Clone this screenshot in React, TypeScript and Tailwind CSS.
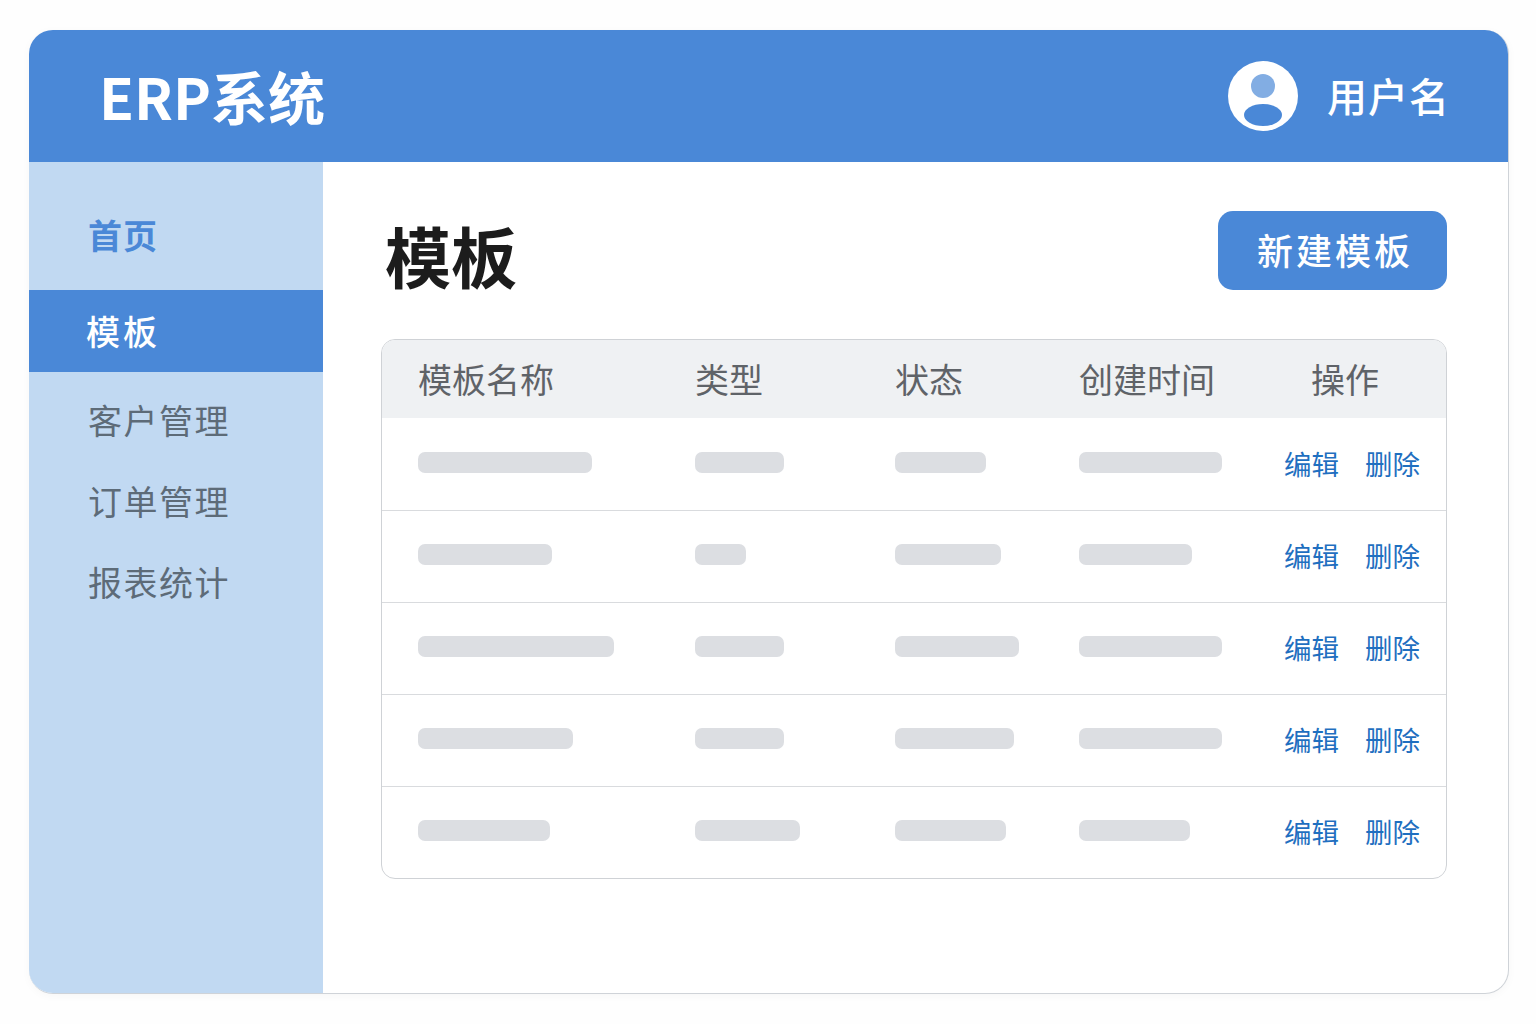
import React from "react";

const columns = "grid grid-cols-[277px_200px_184px_206px_1fr] items-center pl-[36px]";

// skeleton bar widths per row: name, type, status, created
const rows = [
  [174, 89, 91, 143],
  [134, 51, 106, 113],
  [196, 89, 124, 143],
  [155, 89, 119, 143],
  [132, 105, 111, 111],
];

const Bar = ({ width }: { width: number }) => (
  <div className="h-[21px] rounded-[7px] bg-[#dcdee2]" style={{ width }} />
);

const App = () => {
  return (
    <div className="h-[1024px] w-[1536px] bg-[#fefefe] pl-[29px] pt-[30px] font-['Noto_Sans_CJK_SC','Noto_Sans',sans-serif]">
      <div className="flex h-[964px] w-[1480px] flex-col overflow-hidden rounded-[24px] border-r border-b border-[#cfd3d8] bg-white shadow-[0_2px_10px_rgba(0,0,0,0.03)]">
        {/* Header */}
        <header className="flex h-[132px] shrink-0 items-center justify-between bg-[#4a88d7] pl-[70px] pr-[58px]">
          <h1 className="-mt-[2px] text-[57px] leading-none font-bold text-white">ERP系统</h1>
          <div className="flex items-center gap-[29px]">
            <svg width="70" height="70" viewBox="0 0 70 70">
              <circle cx="35" cy="35" r="35" fill="#fff" />
              <circle cx="35" cy="25" r="12" fill="#82ade3" />
              <ellipse cx="35" cy="54" rx="19" ry="11" fill="#4a88d7" />
            </svg>
            <span className="-mt-[2px] text-[40px] leading-none font-medium tracking-[1px] text-white">用户名</span>
          </div>
        </header>

        <div className="flex flex-1">
          {/* Sidebar */}
          <aside className="w-[294px] shrink-0 bg-[#c1d9f2]">
            <div className="flex h-[128px] items-center pl-[59px] pt-[18px] text-[34px] leading-none font-bold tracking-[1px] text-[#4a88d7]">
              首页
            </div>
            <div className="flex h-[82px] items-center pl-[57px] text-[34px] leading-none font-medium tracking-[3px] text-white bg-[#4a88d7]">
              模板
            </div>
            <nav className="flex flex-col pt-[7px] text-[34px] leading-none tracking-[1.5px] text-[#5d6b78]">
              <div className="flex h-[81px] items-center pl-[59px]">客户管理</div>
              <div className="flex h-[81px] items-center pl-[59px]">订单管理</div>
              <div className="flex h-[81px] items-center pl-[59px]">报表统计</div>
            </nav>
          </aside>

          {/* Main */}
          <main className="flex-1 pl-[58px] pr-[61px] pt-[49px]">
            <div className="flex h-[128px] items-start justify-between">
              <h2 className="mt-[10px] pl-[4px] text-[66px] leading-none font-bold text-[#1c1c1c]">模板</h2>
              <button className="flex h-[79px] w-[229px] items-center justify-center rounded-[15px] bg-[#4a88d7] pb-[4px] pl-[5px] text-[36px] leading-none font-medium tracking-[3px] text-white">
                新建模板
              </button>
            </div>

            <div className="overflow-hidden rounded-[14px] border border-[#cfd2d6] bg-white">
              <div className={`${columns} h-[78px] bg-[#eff1f3] text-[34px] leading-none text-[#5f6368]`}>
                <div>模板名称</div>
                <div>类型</div>
                <div>状态</div>
                <div>创建时间</div>
                <div className="pl-[26px]">操作</div>
              </div>
              {rows.map((row, i) => (
                <div
                  key={i}
                  className={`${columns} h-[92px] ${i > 0 ? "border-t border-[#d9dbde]" : ""}`}
                >
                  {row.map((w, j) => (
                    <div key={j} className="-mt-[4px]">
                      <Bar width={w} />
                    </div>
                  ))}
                  <div className="-mt-[1px] -ml-[1px] flex gap-[26px] text-[27.5px] leading-none text-[#1f6fc0]">
                    <span>编辑</span>
                    <span>删除</span>
                  </div>
                </div>
              ))}
            </div>
          </main>
        </div>
      </div>
    </div>
  );
};

export default App;
